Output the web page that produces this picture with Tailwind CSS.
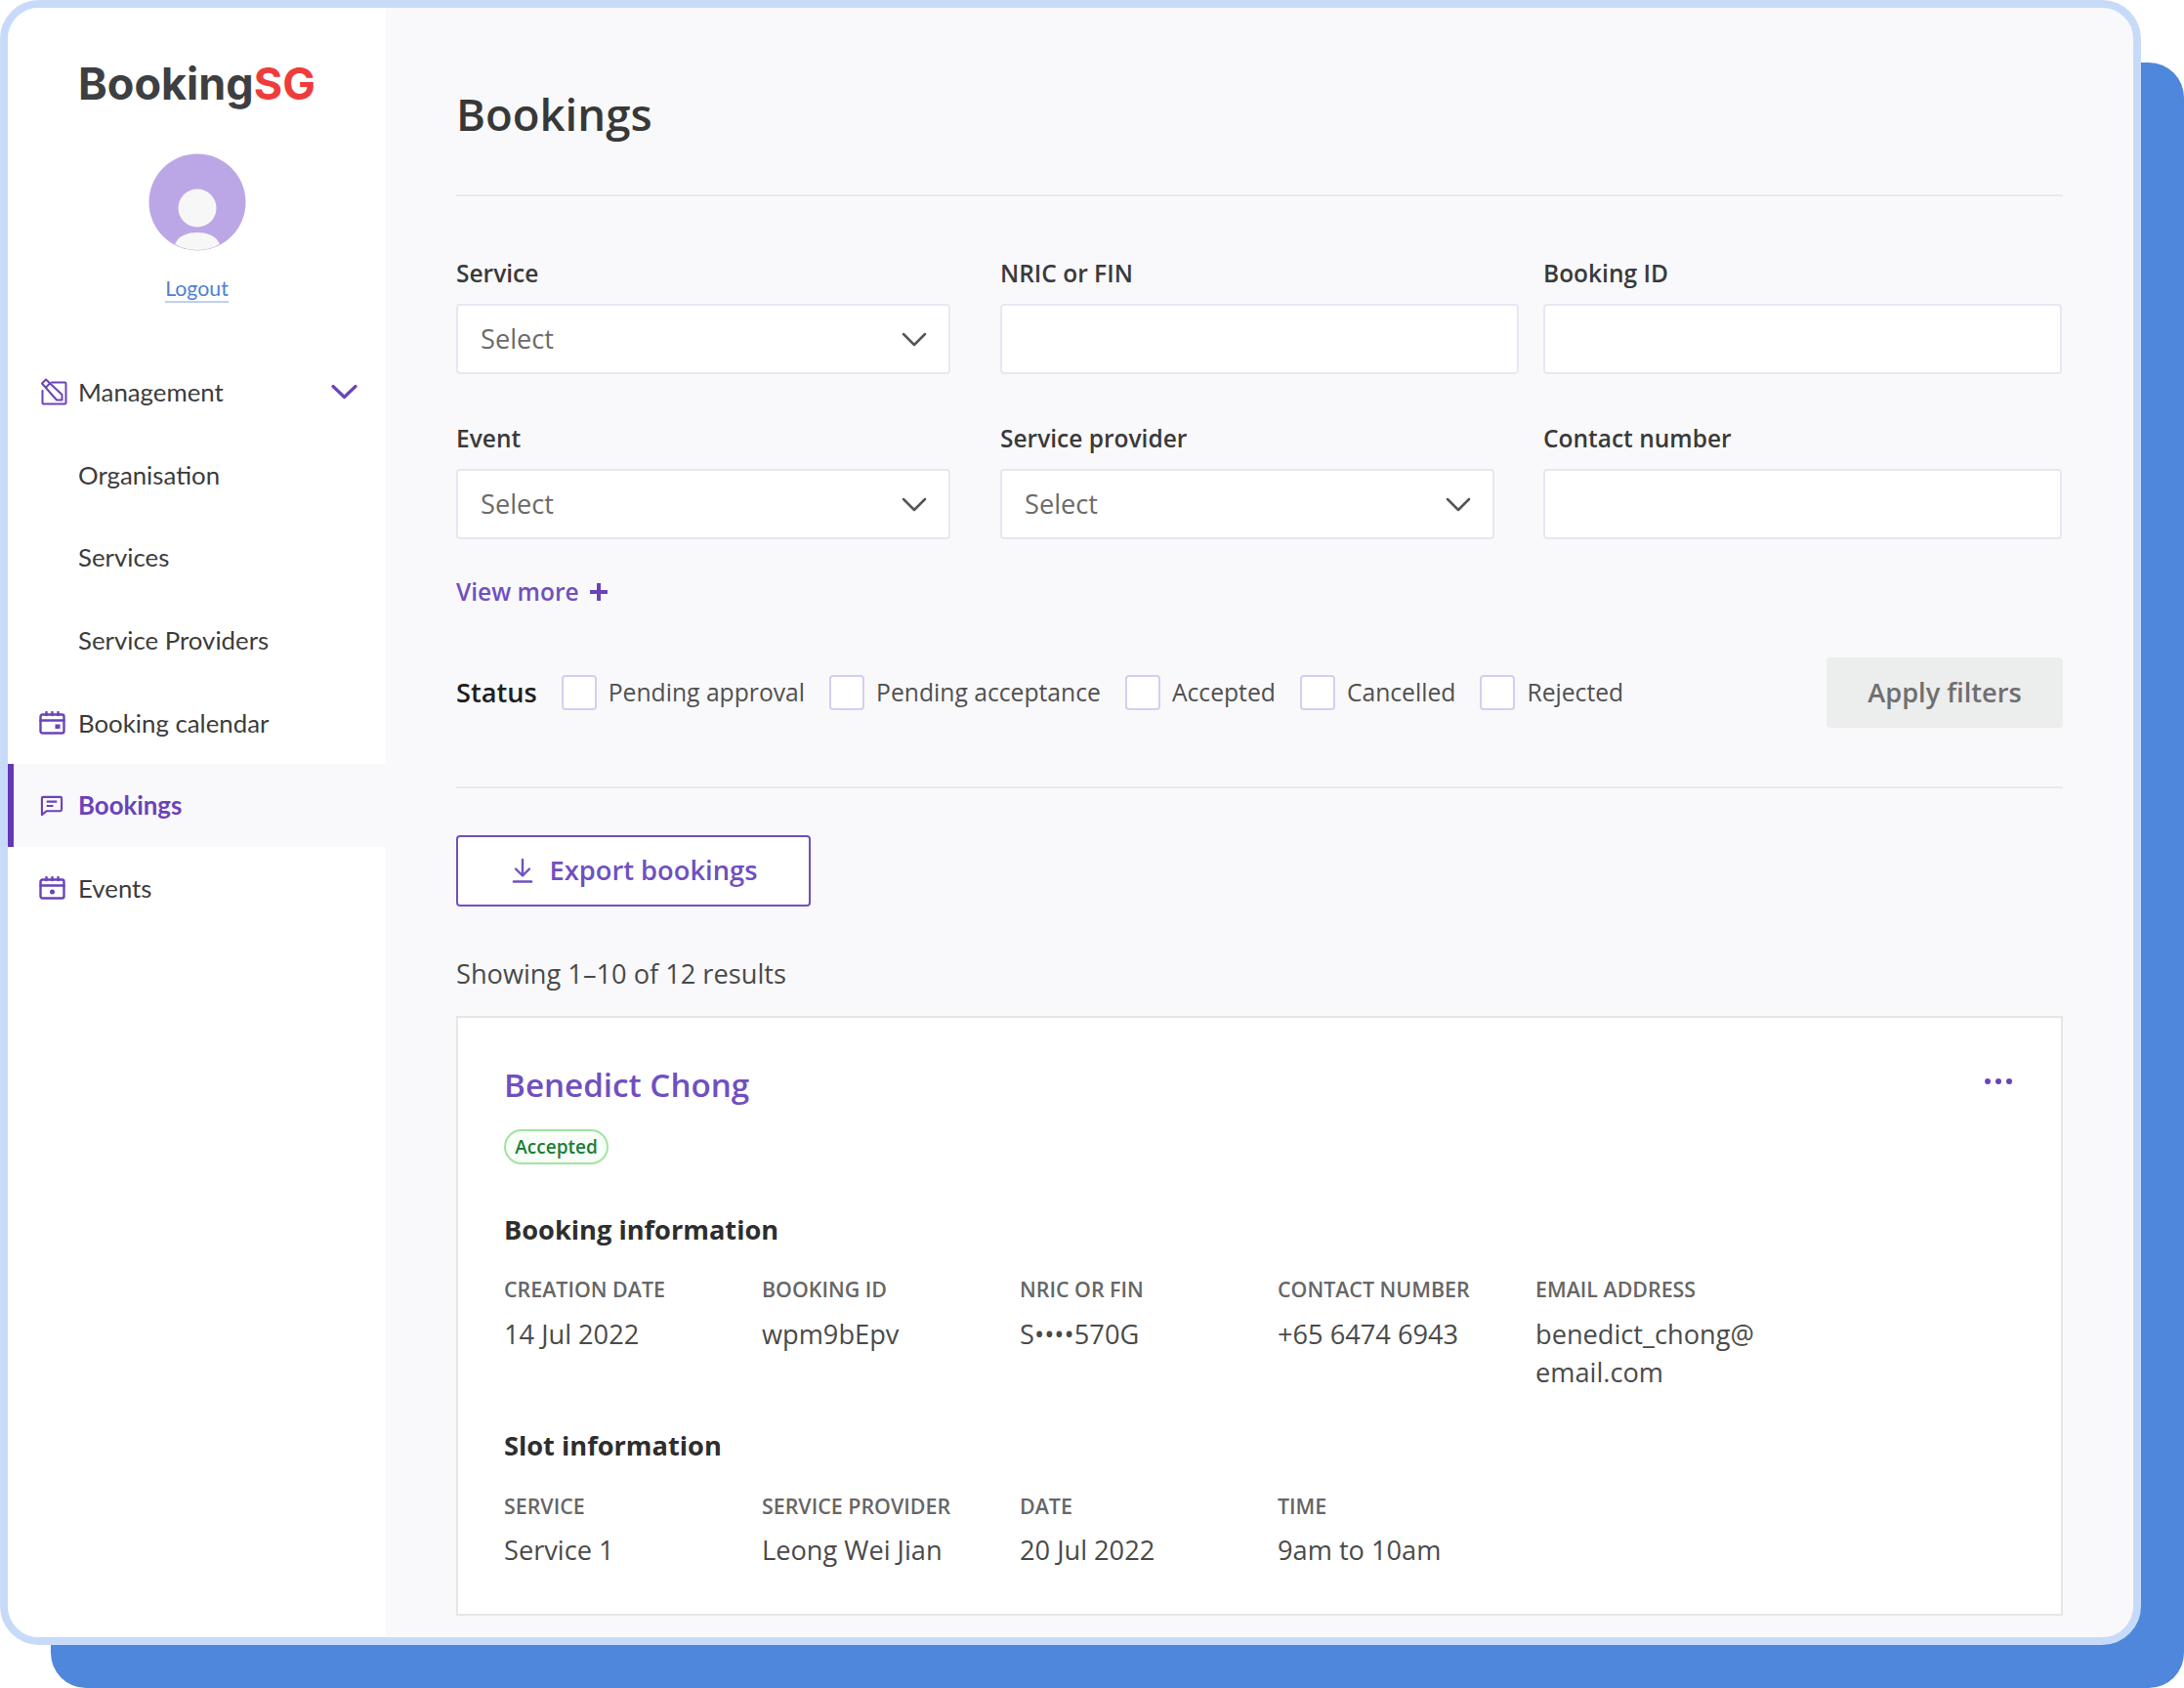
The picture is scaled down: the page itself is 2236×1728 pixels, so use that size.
<!DOCTYPE html>
<html lang="en">
<head>
  <meta charset="UTF-8">
  <meta name="viewport" content="width=device-width, initial-scale=1.0">
  <title>Bookings</title>
  <script src="https://cdn.jsdelivr.net/npm/@tailwindcss/browser@4"></script>
</head>
<body class="bg-white w-[2236px] h-[1728px] overflow-hidden font-['Open_Sans',sans-serif]">
  <div class="relative w-[2236px] h-[1728px]">
    <!-- blue backing behind the window -->
    <div class="absolute left-[52px] top-[64px] right-0 bottom-0 bg-[#4e87db] rounded-[36px]"></div>

    <div class="absolute left-0 top-0 w-[2192px] h-[1684px] border-[8px] border-[#c7dbf9] rounded-[40px] overflow-hidden flex bg-[#f9f9fb]">
      <!-- sidebar -->
      <aside class="w-[387px] shrink-0 bg-white flex flex-col font-['Lato',sans-serif] text-[25.800px] text-[#3c3c3c]">
        <div class="h-[351px] flex flex-col items-center">
          <div class="mt-[53px] h-[50px] leading-[50px] font-['Inter',sans-serif] font-bold text-[45px] text-[#3e3f42]">Booking<span class="text-[#ee3c3c]">SG</span></div>
          <svg class="mt-[46px]" width="100" height="100" viewBox="0 0 100 100">
            <circle cx="50" cy="50" r="49.5" fill="#bba7e5"/>
            <circle cx="50" cy="56" r="19.5" fill="#f7f7f7"/>
            <path d="M27 93c4-9 13-12 23-12s19 3 23 12c-7 4-15 6-23 6s-16-2-23-6z" fill="#f7f7f7"/>
          </svg>
          <a class="mt-[25px] text-[21.300px] leading-[26px] text-[#4f7fd8] border-b-2 border-[#bcd0f3]">Logout</a>
        </div>
        <nav class="flex flex-col">
          <div class="h-[84.7px] flex items-center pl-[33px] pr-[29px]">
            <svg class="w-[28px] h-[28px] shrink-0" viewBox="0 0 28 28" fill="none" stroke="#6b43b9" stroke-width="2" stroke-linejoin="round" stroke-linecap="round">
              <path d="M12 4.500h13.500a1 1 0 0 1 1 1V25.500a1 1 0 0 1-1 1H3.500a1 1 0 0 1-1-1V13"/>
              <path d="M2 5.500L6 1.500 22.500 17v5.500H17z"/>
              <path d="M6 9.500L10 5.500"/>
            </svg>
            <span class="ml-[11px] flex-1">Management</span>
            <svg class="w-[27px] h-[16px]" viewBox="0 0 27 16" fill="none" stroke="#6b43b9" stroke-width="3.200" stroke-linecap="round" stroke-linejoin="round"><path d="M2 2.500l11.500 11 11.500-11"/></svg>
          </div>
          <div class="h-[84.7px] flex items-center pl-[72px]">Organisation</div>
          <div class="h-[84.7px] flex items-center pl-[72px]">Services</div>
          <div class="h-[84.7px] flex items-center pl-[72px]">Service Providers</div>
          <div class="h-[84.7px] flex items-center pl-[32px]">
            <svg class="w-[27px] h-[24px] shrink-0" viewBox="0 0 27 24" fill="none" stroke="#6b43b9" stroke-width="2.400" stroke-linecap="round"><rect x="1.500" y="3.500" width="24" height="19" rx="2"/><path d="M1.500 9.500h24M7.500 1v3M13.500 1v3M19.500 1v3"/><rect x="16.500" y="13.500" width="5" height="4.500" fill="#6b43b9" stroke="none"/></svg>
            <span class="ml-[13px]">Booking calendar</span>
          </div>
          <div class="h-[84.7px] flex items-center pl-[27px] border-l-[6px] border-[#6438b5] bg-[#f9f9fb] text-[#6b43b9] font-bold">
            <svg class="w-[24px] h-[22px] shrink-0" viewBox="0 0 25 22" fill="none" stroke="#6b43b9" stroke-width="2.200" stroke-linejoin="round"><path d="M2 3a1.500 1.500 0 0 1 1.500-1.500h18A1.500 1.500 0 0 1 23 3v12a1.500 1.500 0 0 1-1.500 1.500H7L2 20.500z"/><path d="M7 6.500h11M7 11h7"/></svg>
            <span class="ml-[15px]">Bookings</span>
          </div>
          <div class="h-[84.7px] flex items-center pl-[32px]">
            <svg class="w-[27px] h-[24px] shrink-0" viewBox="0 0 27 24" fill="none" stroke="#6b43b9" stroke-width="2.400" stroke-linecap="round"><rect x="1.500" y="3.500" width="24" height="19" rx="2"/><path d="M1.500 9.500h24M7.500 1v3M13.500 1v3M19.500 1v3"/><circle cx="13.500" cy="16" r="2.500" fill="#6b43b9" stroke="none"/></svg>
            <span class="ml-[13px]">Events</span>
          </div>
        </nav>
      </aside>

      <!-- main -->
      <main class="flex-1 px-[72px] text-[#4a4a4a]">
        <div class="h-[193px] border-b-2 border-[#ebe8f5] pt-[83px]">
          <h1 class="text-[45.500px] leading-[50px] font-semibold text-[#383838]">Bookings</h1>
        </div>

        <div class="grid grid-cols-[557px_556px_531px] mt-[62px] text-[24.500px] font-semibold text-[#3a3a3a]">
          <div>
            <label class="block leading-[34px] h-[48px]">Service</label>
            <div class="w-[506px] h-[72px] bg-white border-2 border-[#e9e6f3] rounded flex items-center justify-between pl-[23px] pr-[22px] text-[27.200px] font-normal text-[#6b6b6b]">
              <span>Select</span>
              <svg width="26" height="15" viewBox="0 0 26 15" fill="none" stroke="#555" stroke-width="2.500" stroke-linecap="round" stroke-linejoin="round"><path d="M2 2l11 11 11-11"/></svg>
            </div>
          </div>
          <div>
            <label class="block leading-[34px] h-[48px]">NRIC or FIN</label>
            <div class="w-[531px] h-[72px] bg-white border-2 border-[#e9e6f3] rounded"></div>
          </div>
          <div>
            <label class="block leading-[34px] h-[48px]">Booking ID</label>
            <div class="w-[531px] h-[72px] bg-white border-2 border-[#e9e6f3] rounded"></div>
          </div>
          <div class="mt-[49px]">
            <label class="block leading-[34px] h-[48px]">Event</label>
            <div class="w-[506px] h-[72px] bg-white border-2 border-[#e9e6f3] rounded flex items-center justify-between pl-[23px] pr-[22px] text-[27.200px] font-normal text-[#6b6b6b]">
              <span>Select</span>
              <svg width="26" height="15" viewBox="0 0 26 15" fill="none" stroke="#555" stroke-width="2.500" stroke-linecap="round" stroke-linejoin="round"><path d="M2 2l11 11 11-11"/></svg>
            </div>
          </div>
          <div class="mt-[49px]">
            <label class="block leading-[34px] h-[48px]">Service provider</label>
            <div class="w-[506px] h-[72px] bg-white border-2 border-[#e9e6f3] rounded flex items-center justify-between pl-[23px] pr-[22px] text-[27.200px] font-normal text-[#6b6b6b]">
              <span>Select</span>
              <svg width="26" height="15" viewBox="0 0 26 15" fill="none" stroke="#555" stroke-width="2.500" stroke-linecap="round" stroke-linejoin="round"><path d="M2 2l11 11 11-11"/></svg>
            </div>
          </div>
          <div class="mt-[49px]">
            <label class="block leading-[34px] h-[48px]">Contact number</label>
            <div class="w-[531px] h-[72px] bg-white border-2 border-[#e9e6f3] rounded"></div>
          </div>
        </div>

        <div class="mt-[37px] flex items-center text-[24.500px] leading-[34px] font-semibold text-[#7050c0]">
          View more
          <svg class="ml-[10px]" width="20" height="20" viewBox="0 0 20 20" fill="none" stroke="#6b43b9" stroke-width="4"><path d="M10 1v18M1 10h18"/></svg>
        </div>

        <div class="mt-[50px] h-[72px] flex items-center text-[24.700px] text-[#505050]">
          <span class="font-semibold text-[#1f1f1f] text-[27.200px] mr-[25px]">Status</span>
          <span class="w-[36px] h-[36px] border-2 border-[#d7cdf0] rounded bg-white mr-[12px]"></span><span class="mr-[25px]">Pending approval</span>
          <span class="w-[36px] h-[36px] border-2 border-[#d7cdf0] rounded bg-white mr-[12px]"></span><span class="mr-[25px]">Pending acceptance</span>
          <span class="w-[36px] h-[36px] border-2 border-[#d7cdf0] rounded bg-white mr-[12px]"></span><span class="mr-[25px]">Accepted</span>
          <span class="w-[36px] h-[36px] border-2 border-[#d7cdf0] rounded bg-white mr-[12px]"></span><span class="mr-[25px]">Cancelled</span>
          <span class="w-[36px] h-[36px] border-2 border-[#d7cdf0] rounded bg-white mr-[12px]"></span><span>Rejected</span>
          <button class="ml-auto w-[242px] h-[72px] bg-[#eceded] rounded text-[27.200px] font-semibold text-[#6f6f6f]">Apply filters</button>
        </div>

        <div class="mt-[59.500px] border-t-2 border-[#ebe8f5]"></div>

        <button class="mt-[48px] w-[363px] h-[73px] bg-white border-2 border-[#7050c0] rounded flex items-center justify-center pl-[2px] text-[27.300px] font-semibold text-[#7050c0]">
          <svg class="mr-[17px]" width="22" height="26" viewBox="0 0 22 26" fill="none" stroke="#7050c0" stroke-width="2.400" stroke-linecap="round" stroke-linejoin="round"><path d="M11 2v16M4 11.500l7 7 7-7"/><path d="M2 24.500h18" stroke-width="2.600"/></svg>
          Export bookings
        </button>

        <p class="mt-[50.500px] text-[27.200px] leading-[38px]">Showing 1–10 of 12 results</p>

        <section class="relative mt-[24px] h-[614px] bg-white border-2 border-[#e6e6e6] px-[47px] pt-[47px]">
          <svg class="absolute right-[49px] top-[61px]" width="30" height="8" viewBox="0 0 30 8" fill="#6b43b9"><circle cx="4" cy="4" r="3"/><circle cx="15" cy="4" r="3"/><circle cx="26" cy="4" r="3"/></svg>
          <h2 class="text-[33.200px] leading-[44px] font-semibold text-[#7050c0]">Benedict Chong</h2>
          <div class="mt-[23px] w-[107px] h-[36px] flex items-center justify-center rounded-full bg-[#f9fef9] border-2 border-[#a4e3a0] text-[19px] font-semibold text-[#1c7e3a]">Accepted</div>
          <h3 class="mt-[48px] text-[27.200px] leading-[38px] font-bold text-[#2e2e2e]">Booking information</h3>
          <div class="mt-[27px] grid grid-cols-[264px_264px_264px_264px_264px] text-[27.200px] leading-[39px]">
            <div><p class="text-[21.400px] leading-[30px] font-semibold text-[#666] mb-[10.500px]">CREATION DATE</p>14 Jul 2022</div>
            <div><p class="text-[21.400px] leading-[30px] font-semibold text-[#666] mb-[10.500px]">BOOKING ID</p>wpm9bEpv</div>
            <div><p class="text-[21.400px] leading-[30px] font-semibold text-[#666] mb-[10.500px]">NRIC OR FIN</p>S••••570G</div>
            <div><p class="text-[21.400px] leading-[30px] font-semibold text-[#666] mb-[10.500px]">CONTACT NUMBER</p>+65 6474 6943</div>
            <div><p class="text-[21.400px] leading-[30px] font-semibold text-[#666] mb-[10.500px]">EMAIL ADDRESS</p>benedict_chong@<br>email.com</div>
          </div>
          <h3 class="mt-[37px] text-[27.200px] leading-[38px] font-bold text-[#2e2e2e]">Slot information</h3>
          <div class="mt-[28px] grid grid-cols-[264px_264px_264px_264px_264px] text-[27.200px] leading-[39px]">
            <div><p class="text-[21.400px] leading-[30px] font-semibold text-[#666] mb-[10px]">SERVICE</p>Service 1</div>
            <div><p class="text-[21.400px] leading-[30px] font-semibold text-[#666] mb-[10px]">SERVICE PROVIDER</p>Leong Wei Jian</div>
            <div><p class="text-[21.400px] leading-[30px] font-semibold text-[#666] mb-[10px]">DATE</p>20 Jul 2022</div>
            <div><p class="text-[21.400px] leading-[30px] font-semibold text-[#666] mb-[10px]">TIME</p>9am to 10am</div>
          </div>
        </section>
      </main>
    </div>
  </div>
</body>
</html>
